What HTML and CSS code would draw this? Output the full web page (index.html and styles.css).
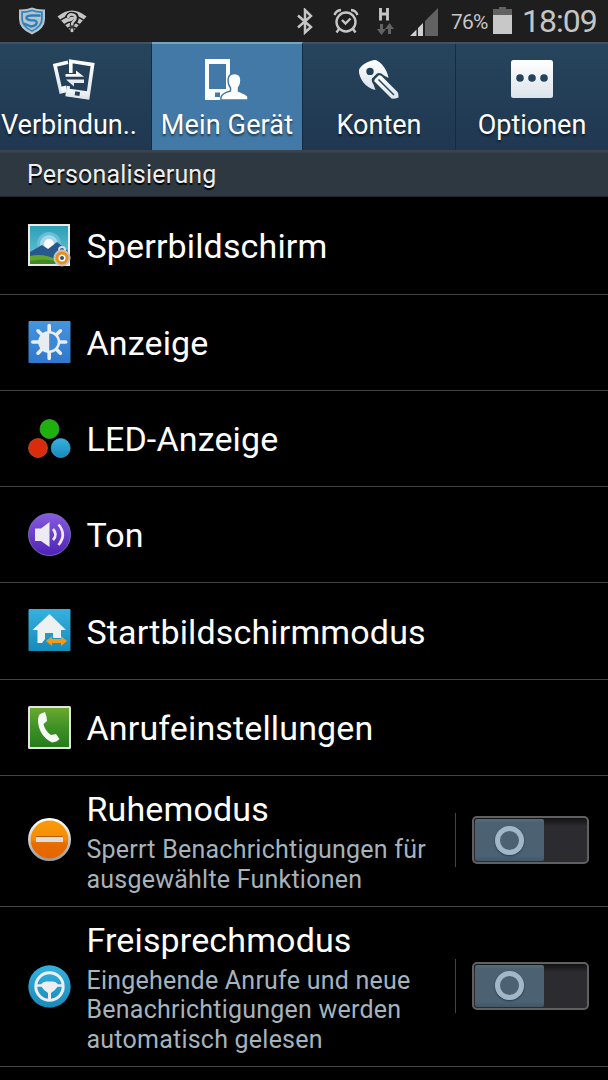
FILE: index.html
```html
<!DOCTYPE html>
<html lang="de">
<head>
<meta charset="utf-8">
<title>Einstellungen</title>
<link rel="stylesheet" href="styles.css">
</head>
<body>
<svg class="defs" width="0" height="0">
  <defs>
    <linearGradient id="white" x2="0" y2="1"><stop stop-color="#fff"/><stop offset="1" stop-color="#dbe3ea"/></linearGradient>
    <linearGradient id="sky" x2="0" y2="1"><stop stop-color="#299fb5"/><stop offset="1" stop-color="#72c9da"/></linearGradient>
    <linearGradient id="blue" x2="0" y2="1"><stop stop-color="#4595df"/><stop offset="1" stop-color="#2f78cd"/></linearGradient>
    <linearGradient id="purple" x2="0" y2="1"><stop stop-color="#865ce0"/><stop offset="1" stop-color="#4e22b5"/></linearGradient>
    <linearGradient id="cyan" x2="0" y2="1"><stop stop-color="#36b1df"/><stop offset="1" stop-color="#178bbb"/></linearGradient>
    <linearGradient id="green" x2="0" y2="1"><stop stop-color="#69a82f"/><stop offset=".5" stop-color="#3f9126"/><stop offset="1" stop-color="#257d19"/></linearGradient>
    <linearGradient id="orange" x2="0" y2="1"><stop stop-color="#fa9d0a"/><stop offset=".5" stop-color="#f48b05"/><stop offset=".6" stop-color="#e66c00"/><stop offset="1" stop-color="#e56500"/></linearGradient>
    <linearGradient id="ring" x2="0" y2="1"><stop stop-color="#fff"/><stop offset="1" stop-color="#999ca0"/></linearGradient>
  </defs>
</svg>
<header class="status">
  <svg class="s-shield" width="28" height="28" viewBox="0 0 28 28"><path d="M14 .5Q20 3 27 2.500V12Q27 22 14 27.500Q1 22 1 12V2.500Q8 3 14 .5Z" fill="#b9c3cb"/><path d="M14 2.500Q19 4.500 24.800 4.200V12Q24.800 20 14 25Q3.200 20 3.200 12V4.200Q9 4.500 14 2.500Z" fill="#2d86c0"/><path d="M14 4.300Q18 5.800 23 6V12Q23 18.700 14 23.200Q5 18.700 5 12V6Q10 5.800 14 4.300Z" fill="#b8c2ca"/><path d="M22.500 8.500H14Q9 8.500 8.500 10.500T13 13.300H16Q19.500 14 18.500 16.500T13 19.500L6 16.500" fill="none" stroke="#2880ba" stroke-width="2.300"/></svg>
  <svg class="s-wifi" width="30" height="24" viewBox="0 0 30 24"><path d="M.5 6.500Q15-5.500 29.500 6.500L15 22.500Z" fill="#c5c5c5"/><path d="M3.500 10.200Q15 2 26.500 10.200M7.500 14.700Q15 9 22.500 14.700M10.500 18.500Q15 15 19.500 18.500" fill="none" stroke="#1e1e1e" stroke-width="1.500"/><path d="M10 8Q11 4 15 4Q19.500 4 19.500 8Q19.500 10.500 17 12Q15 13 15 16M15 17.500V22" fill="none" stroke="#1e1e1e" stroke-width="4.600"/><path d="M11 8Q11.500 4 15.300 4.500Q18.500 5 18.500 8Q18.500 10 16.500 11.500Q15 12.500 15 15.500M15 18.500V22" fill="none" stroke="#c5c5c5" stroke-width="2.700"/></svg>
  <svg class="s-bt" width="18" height="27" viewBox="0 0 18 27"><path d="M2 7.500L15 19L9 24.500V2L15 8L2 19.500" fill="none" stroke="#c5c5c5" stroke-width="2.500"/></svg>
  <svg class="s-alarm" width="26" height="26" viewBox="0 0 26 26"><g fill="none" stroke="#c5c5c5" stroke-width="2.400"><circle cx="13" cy="14" r="9.500"/><path d="M9 12L12.500 15.500L17.500 10.500M1.500 7Q3 2.500 8 2M24.500 7Q23 2.500 18 2M6 21L3.500 24.500M20 21L22.500 24.500"/></g></svg>
  <svg class="s-data" width="18" height="29" viewBox="0 0 18 29"><path d="M3.500 1V13.500M10.500 1V13.500M3.500 7H10.500" fill="none" stroke="#c5c5c5" stroke-width="2.900"/><path d="M3 17H6V22H9L4.500 28L0 22H3ZM11 27H14V22H17L12.500 16L8 22H11Z" fill="#626262"/></svg>
  <svg class="s-signal" width="28" height="28" viewBox="0 0 28 28"><path d="M0 28L6.500 21.500V28ZM8 28V20L13 15V28Z" fill="#d0d0d0"/><path d="M15 28V13L28 0V28Z" fill="#626262"/></svg>
  <span class="percent">76%</span>
  <svg class="s-batt" width="19" height="27" viewBox="0 0 19 27"><path d="M0 2H6V0H13V2H19V8H0Z" fill="#626262"/><path d="M0 8H19V27H0Z" fill="#c8c8c8"/></svg>
  <span class="clock">18:09</span>
</header>

<nav class="tabs">
  <div class="tab first">
    <svg width="48" height="48" viewBox="0 0 48 48"><g fill="none" stroke="url(#white)" stroke-width="3.600"><path d="M19 7.300L6 10.300L12 36.800L17 35.600"/><path d="M21.800 18V6.300L43.600 9.600L38.800 42.700L18.300 39.800L19.300 31"/></g><g fill="url(#white)"><path d="M11.500 32L17 30.500V37L12.500 38ZM18.500 33.500L40 36.500L39 44L17.500 41Z"/><path d="M16.500 19H27V15.500L35 21.800H16.500ZM35 24.500H17L25 31.500V28H35Z"/></g><path d="M26.300 36.300L31 37L30.400 41L25.700 40.300Z" fill="#23405a"/></svg>
    <span>Verbindun..</span>
  </div>
  <div class="tab active">
    <svg width="48" height="48" viewBox="0 0 48 48"><path fill="#fff" fill-rule="evenodd" d="M3 4H28V45H3ZM7 9V34H24V9ZM13 37.500V42H18V37.500Z"/><path d="M32.500 18.500Q39 18.500 39 25.500Q39 29.500 36.500 33V36Q44.500 39 46 41.500V45H19V42Q20.500 38 28.500 36V33Q26 29.500 26 25.500Q26 18.500 32.500 18.500Z" fill="#fff" stroke="#4379a6" stroke-width="1.500"/></svg>
    <span>Mein Gerät</span>
  </div>
  <div class="tab">
    <svg width="48" height="48" viewBox="0 0 48 48"><path fill="url(#white)" fill-rule="evenodd" d="M21 5Q23.500 5 28 9.500Q33.500 16 34.500 23L30 20.500Q26 17 23 18.500L18 23.500Q17 26 19.500 29.500L21.500 35Q14 33.500 9 27Q4.500 20 5 15Q6 11.500 11 8.500Q17 5 21 5ZM16 12.700A3.700 3.700 0 1 0 16 20.100A3.700 3.700 0 1 0 16 12.700Z"/><path d="M24.500 20.500Q26 19.500 28 21.500L43.500 37Q45 39 44.500 42.500Q42 44 37.500 43.500L20.500 26.500Q20 25 21 24Z" fill="url(#white)"/><path d="M24.500 24.500L40 40" stroke="#264562" stroke-width="1.500"/></svg>
    <span>Konten</span>
  </div>
  <div class="tab">
    <svg width="48" height="48" viewBox="0 0 48 48"><rect x="3" y="5" width="42" height="38" rx="2.500" fill="url(#white)"/><g fill="#25435c"><circle cx="12" cy="23" r="3.800"/><circle cx="24" cy="23" r="3.800"/><circle cx="36" cy="23" r="3.800"/></g></svg>
    <span>Optionen</span>
  </div>
</nav>

<h2 class="section">Personalisierung</h2>

<main class="list">
  <div class="row r1"><svg class="icon" width="43" height="43" viewBox="0 0 43 43"><path d="M0 0H42V42H0Z" fill="#e8eaea"/><path d="M2 2H40V40H2Z" fill="url(#sky)"/><circle cx="21" cy="20" r="12" fill="#6abdd5"/><circle cx="21" cy="20" r="9" fill="#a0d9e7"/><circle cx="21" cy="20" r="5" fill="#fff"/><path d="M2 28L14 21L20 25L29 18L40 27V34H2Z" fill="#28598d"/><path d="M2 32Q15 29 27 35L40 33V40H2Z" fill="#62a42d"/><path d="M2 37Q15 34 27 37V40H2Z" fill="#3c8b20"/><path d="M31 30V26Q31 23 34 23T37 26V30" fill="none" stroke="#d8dddf" stroke-width="2"/><circle cx="34" cy="34" r="8.500" fill="#bfc4c7"/><circle cx="34" cy="34" r="5" fill="#fff" stroke="#ee8c18" stroke-width="3"/><circle cx="34" cy="34" r="2" fill="#335266"/></svg><span class="title">Sperrbildschirm</span></div>
  <div class="row"><svg class="icon" width="43" height="43" viewBox="0 0 43 43"><rect x=".5" width="42" height="42" rx="1" fill="url(#blue)"/><path d="M21.200 4.500V37.500M4.700 21H37.700M10 9.800L32.400 32.200M32.400 9.800L10 32.200" stroke="#e9edf1" stroke-width="3.600" stroke-linecap="round"/><circle cx="21.200" cy="21" r="11" fill="#e9edf1"/><path d="M21.200 12.500A8.500 8.500 0 0 1 21.200 29.500Z" fill="#3c88d4"/></svg><span class="title">Anzeige</span></div>
  <div class="row"><svg class="icon" width="43" height="43" viewBox="0 0 43 43"><circle cx="21.500" cy="12" r="9.500" fill="#1eb00d" stroke="#54a34a" stroke-width=".7"/><circle cx="10" cy="31" r="9.500" fill="#d92c0b" stroke="#ba573c" stroke-width=".7"/><circle cx="32.700" cy="31" r="9.500" fill="url(#cyan)" stroke="#49a0c4" stroke-width=".7"/></svg><span class="title">LED-Anzeige</span></div>
  <div class="row"><svg class="icon" width="43" height="43" viewBox="0 0 43 43"><circle cx="21.500" cy="21.500" r="21" fill="url(#purple)" stroke="#9177cf" stroke-width=".8"/><path d="M7 15.500H13L21.500 9V34L13 28H7Z" fill="#eeeaf4"/><path d="M25 16Q30 21.500 25 27M30.500 11.500Q39 21.500 30.500 32" fill="none" stroke="#eeeaf4" stroke-width="2.700"/></svg><span class="title">Ton</span></div>
  <div class="row r5"><svg class="icon" width="43" height="43" viewBox="0 0 43 43"><rect x=".5" width="42" height="42" rx="1" fill="url(#cyan)"/><path d="M21.500 5L38 21H33V29H25V24H17V30L14 34H9.500V21H4.500Z" fill="#eef1f2"/><path d="M18 32L24 27V30H33V27L39 32L33 37V34H24V37Z" fill="#f39a1c"/></svg><span class="title">Startbildschirmmodus</span></div>
  <div class="row"><svg class="icon" width="43" height="43" viewBox="0 0 43 43"><rect width="43" height="43" rx="1.500" fill="#e1e4df"/><path d="M2 2H41V41H2Z" fill="url(#green)"/><path d="M12 8L17 6Q19 11 19 15L15.500 18Q17 25 23 29L28 28L31.500 33Q29 36 24 36.500Q11 30 10 15Q10 10 12 8Z" fill="#f7f9f6"/></svg><span class="title">Anrufeinstellungen</span></div>
  <div class="row tall"><svg class="icon" width="43" height="43" viewBox="0 0 43 43"><circle cx="21.500" cy="21.500" r="20.200" fill="url(#orange)" stroke="url(#ring)" stroke-width="2.600"/><path d="M8 18H35V19H8Z" fill="#b85a00"/><path d="M8 19H35V24H8Z" fill="#dedede"/></svg>
    <div class="copy"><div class="title">Ruhemodus</div><p>Sperrt Benachrichtigungen für<br>ausgewählte Funktionen</p></div>
    <div class="control"><div class="switch"><div class="knob"><i></i></div></div></div></div>
  <div class="row taller"><svg class="icon" width="43" height="43" viewBox="0 0 43 43"><circle cx="21.500" cy="21.500" r="21.200" fill="url(#cyan)"/><circle cx="21.500" cy="21.500" r="13.700" fill="none" stroke="#eee" stroke-width="3"/><path d="M8 19.200H13Q15 16.500 18 16.500H25Q28 16.500 30 19.200H35V21.700H29.500Q27.500 25 23 28V35H20V28Q15.500 25 13.500 21.700H8Z" fill="#eee"/></svg>
    <div class="copy"><div class="title">Freisprechmodus</div><p>Eingehende Anrufe und neue<br>Benachrichtigungen werden<br>automatisch gelesen</p></div>
    <div class="control"><div class="switch"><div class="knob"><i></i></div></div></div></div>
</main>
</body>
</html>
```
FILE: styles.css
```css
* { box-sizing: border-box; }
html, body { margin: 0; background: #000; }
body { width: 608px; height: 1080px; overflow: hidden; font-family: Roboto, sans-serif; color: #fff; }
.defs { display: block; }
svg { display: block; flex: none; }

.status { height: 42px; background: #1e1e1e; color: #c5c5c5; display: flex; align-items: flex-start; padding-left: 18px; }
.s-shield { margin-top: 7px; }
.s-wifi { margin: 10px 0 0 11px; }
.s-bt { margin: 8px 0 0 209px; }
.s-alarm { margin: 8px 0 0 19px; }
.s-data { margin: 7px 0 0 18px; }
.s-signal { margin: 8px 0 0 15px; }
.percent { width: 41px; margin-left: 13px; margin-top: 9px; font-size: 21px; line-height: 26px; white-space: nowrap; letter-spacing: -.8px; }
.s-batt { margin: 7px 0 0 1px; }
.clock { margin: 3px 0 0 10px; font-size: 32px; line-height: 36px; white-space: nowrap; letter-spacing: -1px; }

.tabs { height: 108px; display: grid; grid-template-columns: 152px 151px 153px 152px; background: linear-gradient(#26455c, #203751); border-top: 2px solid #44515f; }
.tab { display: flex; flex-direction: column; align-items: center; padding-top: 11px; border-right: 1px solid #142b41; white-space: nowrap; font-size: 27px; line-height: 34px; text-shadow: 0 2px 2px #0008; }
.tab:last-child { border-right: 0; }
.tab svg { margin-right: 2px; }
.tab:last-child svg { margin-right: 0; }
.tab span { margin-top: 5px; }
.first { align-items: flex-start; padding-left: 1px; }
.first svg { margin-left: 48px; }
.active { background: #4379a6; margin-top: -2px; border-top: 2px solid #74a5bb; }
.active svg { margin-right: 3px; }
.active span { letter-spacing: .15px; }

.section { margin: 0; height: 47px; background: linear-gradient(#3a444c 0 2px, #2e3840 3px); border-bottom: 1px solid #20262b; padding-left: 27px; font-size: 25px; font-weight: 400; line-height: 50px; letter-spacing: .2px; color: #eee; text-shadow: 0 2px 1px #000; }

.row { height: 96px; border-bottom: 1px solid #444; display: flex; align-items: center; padding-left: 28px; }
.r1 { height: 98px; }
.r5 { height: 97px; }
.r5 .icon { margin-top: -1px; }
.icon { margin-right: 15.500px; }
.title { font-size: 34px; line-height: 40px; white-space: nowrap; letter-spacing: .14px; }
.row > .title { padding-top: 1px; }
.copy { flex: 1; }
.copy p { margin: 6px 0 -1px; font-size: 25px; line-height: 29.500px; letter-spacing: .23px; color: #a6b3bc; white-space: nowrap; }
.tall { height: 131px; }
.tall .icon { margin-top: -3px; }
.tall .control { margin-top: -2px; }
.taller { height: 160px; }
.taller .control { margin-top: -2px; }
.control { width: 153px; height: 54px; border-left: 1px solid #444; display: flex; align-items: center; padding-left: 16px; }
.switch { width: 117px; height: 48px; border: 2px solid #606060; border-radius: 5px; background: linear-gradient(#111, #2b2b30 8px); padding: 1px; }
.knob { width: 69px; height: 42px; background: linear-gradient(#526e80, #4c6172 4px 37px, #405769); border-radius: 2px; display: grid; place-items: center; }
.knob i { width: 29px; height: 29px; border: 5px solid #a2b8c8; border-radius: 50%; box-shadow: 0 1px 2px #263a49; }
```
